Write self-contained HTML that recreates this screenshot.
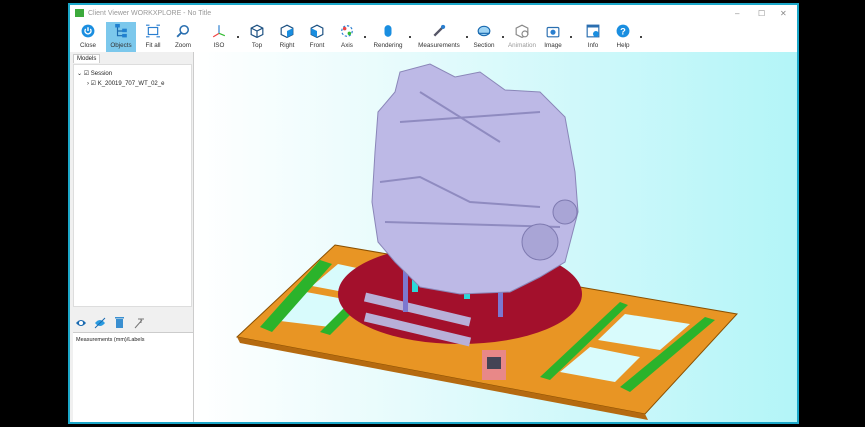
<!DOCTYPE html>
<html><head><meta charset="utf-8"><style>
*{margin:0;padding:0;box-sizing:border-box}
body{width:865px;height:425px;background:#000;font-family:"Liberation Sans",sans-serif;position:relative;overflow:hidden}
.win{position:absolute;left:68px;top:3px;width:731px;height:421px;background:#fff;border:2px solid #1ba7c9}
.title{position:absolute;left:0;top:0;width:727px;height:17px;font-size:7px;color:#999;line-height:17px;padding-left:18px}
.logo{position:absolute;left:5px;top:4px;width:9px;height:8px;background:#3caa3c}
.ctl{position:absolute;top:0;font-size:8px;color:#888;line-height:17px}
.tb{position:absolute;left:0;top:17px;width:727px;height:30px}
.btn{position:absolute;top:0;height:30px;font-size:6.3px;color:#333;text-align:center}
.btn span{position:absolute;bottom:3px;left:0;right:0}
.ic{position:absolute;top:2px;left:50%;margin-left:-7px;width:14px;height:14px}
.dd{position:absolute;top:14px;width:2px;height:2px;background:#444}
.left{position:absolute;left:0;top:47px;width:124px;height:370px;background:#f0f0f0;border-right:1px solid #ccc}
.tab{position:absolute;left:3px;top:2px;font-size:6px;color:#222;background:#fff;border:1px solid #ccc;border-bottom:none;padding:1px 3px}
.tree{position:absolute;left:3px;top:12px;width:119px;height:243px;background:#fff;border:1px solid #ddd;font-size:6px;color:#222}
.meas{position:absolute;left:3px;top:280px;width:120px;height:90px;background:#fff;border-top:1px solid #ccc;font-size:5.5px;color:#222;padding:4px 3px}
.vp{position:absolute;left:125px;top:47px;width:602px;height:370px;background:linear-gradient(90deg,#fff 0%,#e6fbfc 35%,#b3f5f8 100%)}
</style></head><body>
<div class="win">
<div class="title"><div class="logo"></div>Client Viewer WORKXPLORE - No Title
<span class="ctl" style="left:665px">–</span><span class="ctl" style="left:688px">☐</span><span class="ctl" style="left:710px">✕</span></div>
<div class="tb">
<div class="btn" style="left:4px;width:28px"><svg class="ic" viewBox="0 0 12 12"><circle cx="6" cy="6" r="5.5" fill="#1a8ee0"/><path d="M4 4.2A2.6 2.6 0 1 0 8 4.2M6 2.8V6" stroke="#fff" stroke-width="1.2" fill="none"/></svg><span>Close</span></div>
<div class="btn" style="left:36px;width:30px;background:#7cc8ec"><svg class="ic" viewBox="0 0 12 12"><path d="M3 2v8h5M3 6h5" stroke="#1a6ab0" fill="none"/><rect x="1" y="0" width="4" height="3" fill="#2080d0"/><rect x="7" y="4" width="4" height="3" fill="#2080d0"/><rect x="7" y="8.5" width="4" height="3" fill="#2080d0"/></svg><span>Objects</span></div>
<div class="btn" style="left:70px;width:26px"><svg class="ic" viewBox="0 0 12 12"><rect x="2" y="3" width="8" height="6" stroke="#2a7fd0" fill="none"/><path d="M0 1h3M9 1h3M0 11h3M9 11h3" stroke="#2a7fd0"/></svg><span>Fit all</span></div>
<div class="btn" style="left:100px;width:26px"><svg class="ic" viewBox="0 0 12 12"><circle cx="7" cy="5" r="3.5" stroke="#2a6fb0" fill="none" stroke-width="1.3"/><path d="M4.5 7.5L1 11" stroke="#2a6fb0" stroke-width="1.6"/></svg><span>Zoom</span></div>
<div class="btn" style="left:136px;width:26px"><svg class="ic" viewBox="0 0 12 12"><path d="M6 1v7" stroke="#2a7fd0" fill="none"/><path d="M6 8L1 11" stroke="#e44"/><path d="M6 8l5 2" stroke="#3b3"/></svg><span>ISO</span></div>
<div class="dd" style="left:167px"></div>
<div class="btn" style="left:174px;width:26px"><svg class="ic" viewBox="0 0 12 12"><path d="M6 1l5 2.5v5.5L6 11.5 1 9V3.5z" fill="#fff" stroke="#1a4f80"/><path d="M1 3.5L6 6l5-2.5M6 6v5.5" stroke="#1a4f80" fill="none"/></svg><span>Top</span></div>
<div class="btn" style="left:204px;width:26px"><svg class="ic" viewBox="0 0 12 12"><path d="M6 1l5 2.5v5.5L6 11.5 1 9V3.5z" fill="#fff" stroke="#1a4f80"/><path d="M6 6l5-2.5v5.5L6 11.5z" fill="#1a8ee0"/></svg><span>Right</span></div>
<div class="btn" style="left:234px;width:26px"><svg class="ic" viewBox="0 0 12 12"><path d="M6 1l5 2.5v5.5L6 11.5 1 9V3.5z" fill="#fff" stroke="#1a4f80"/><path d="M1 3.5L6 6v5.5L1 9z" fill="#1a8ee0"/></svg><span>Front</span></div>
<div class="btn" style="left:264px;width:26px"><svg class="ic" viewBox="0 0 12 12"><circle cx="6" cy="6" r="4.5" stroke="#2a7fd0" fill="none" stroke-dasharray="2 1.5"/><circle cx="4" cy="4" r="1.5" fill="#e44"/><circle cx="8" cy="8" r="1.5" fill="#3b3"/></svg><span>Axis</span></div>
<div class="dd" style="left:294px"></div>
<div class="btn" style="left:302px;width:32px"><svg class="ic" viewBox="0 0 12 12"><rect x="3" y="1" width="6" height="10" rx="3" fill="#1a8ee0"/></svg><span>Rendering</span></div>
<div class="dd" style="left:339px"></div>
<div class="btn" style="left:347px;width:44px"><svg class="ic" viewBox="0 0 12 12"><path d="M2 10L9 3" stroke="#556" stroke-width="2"/><circle cx="9.5" cy="2.5" r="1.8" fill="#2a7fd0"/></svg><span>Measurements</span></div>
<div class="dd" style="left:396px"></div>
<div class="btn" style="left:400px;width:28px"><svg class="ic" viewBox="0 0 12 12"><ellipse cx="6" cy="6" rx="5" ry="4" fill="#9fd4f4" stroke="#1a6ab0"/><path d="M1 8h10" stroke="#1a6ab0"/></svg><span>Section</span></div>
<div class="dd" style="left:432px"></div>
<div class="btn" style="left:436px;width:32px;color:#999"><svg class="ic" viewBox="0 0 12 12"><path d="M6 1l5 2.5v5.5L6 11.5 1 9V3.5z" fill="none" stroke="#888"/><circle cx="8.5" cy="8.5" r="2.5" fill="#fff" stroke="#888"/></svg><span>Animation</span></div>
<div class="btn" style="left:470px;width:26px"><svg class="ic" viewBox="0 0 12 12"><rect x="1" y="3" width="10" height="8" rx="1" fill="none" stroke="#2a6fb0"/><circle cx="6" cy="7" r="2.2" fill="#2a7fd0"/></svg><span>Image</span></div>
<div class="dd" style="left:500px"></div>
<div class="btn" style="left:510px;width:26px"><svg class="ic" viewBox="0 0 12 12"><rect x="1" y="1" width="10" height="10" fill="#fff" stroke="#2a6fb0"/><rect x="1" y="1" width="10" height="2" fill="#2a6fb0"/><circle cx="8.5" cy="8.5" r="2.5" fill="#1a8ee0"/></svg><span>Info</span></div>
<div class="btn" style="left:540px;width:26px"><svg class="ic" viewBox="0 0 12 12"><circle cx="6" cy="6" r="5.5" fill="#1a8ee0"/><text x="6" y="9" font-size="8" font-weight="bold" fill="#fff" text-anchor="middle" font-family="Liberation Sans">?</text></svg><span>Help</span></div>
<div class="dd" style="left:570px"></div>
</div>
<div class="left">
<div class="tab">Models</div>
<div class="tree">
<div style="position:absolute;left:3px;top:5px">⌄ ☑ Session</div>
<div style="position:absolute;left:13px;top:15px">› ☑ K_20019_707_WT_02_e</div>
</div>
<svg style="position:absolute;left:5px;top:263px" width="80" height="16" viewBox="0 0 80 16">
<path d="M1 8Q6 2 11 8Q6 14 1 8z" fill="#1a6ab0"/><circle cx="6" cy="8" r="2" fill="#fff"/>
<path d="M20 8Q25 2 30 8Q25 14 20 8z" fill="#2a9be0"/><path d="M20 13L30 3" stroke="#1a6ab0"/>
<rect x="41" y="4" width="7" height="9" fill="#3a8fd0"/><rect x="40" y="2" width="9" height="1.5" fill="#3a8fd0"/>
<path d="M60 13l7-8M63 4h6M66 4v4" stroke="#777" fill="none"/>
</svg>
<div class="meas">Measurements (mm)/Labels</div>
</div>
<div class="vp">
<svg width="602" height="370" viewBox="195 50 602 370">
<polygon points="335,243 737,312 645,412 237,335" fill="#e89524" stroke="#8a5000" stroke-width="1"/>
<polygon points="272,318 306,290 360,300 330,325" fill="#d8fbfc"/>
<polygon points="312,284 338,262 385,272 365,294" fill="#d8fbfc"/>
<polygon points="560,370 590,345 640,355 615,380" fill="#d8fbfc"/>
<polygon points="598,338 625,312 690,322 660,348" fill="#d8fbfc"/>
<polygon points="237,335 645,412 648,418 240,341" fill="#b56a10"/>
<polygon points="260,325 320,258 332,262 272,330" fill="#2bb32b"/>
<polygon points="320,330 360,290 368,295 330,333" fill="#2bb32b"/>
<polygon points="540,375 620,300 628,303 550,378" fill="#2bb32b"/>
<polygon points="620,385 705,315 715,318 630,390" fill="#2bb32b"/>
<ellipse cx="460" cy="292" rx="122" ry="50" fill="#a3102c"/>
<rect x="482" y="348" width="24" height="30" fill="#e88888"/>
<rect x="487" y="355" width="14" height="12" fill="#445"/>
<path d="M365 295L470 320M365 315L470 340" stroke="#b8b0d8" stroke-width="9"/>
<rect x="403" y="240" width="5" height="70" fill="#7c78d0"/>
<rect x="498" y="255" width="5" height="60" fill="#7c78d0"/>
<rect x="412" y="262" width="6" height="28" fill="#2cd8d8"/>
<rect x="464" y="272" width="6" height="25" fill="#2cd8d8"/>
<path d="M375 150L378 110L395 90L400 70L430 62L455 75L480 70L505 88L540 90L565 115L575 170L578 210L565 260L540 275L510 290L460 292L420 285L395 260L378 240L372 200z" fill="#bdb9e6" stroke="#8a86b8"/>
<path d="M380 180L420 175L470 200L540 205M385 220L560 225M400 120L540 110M420 90L500 140" stroke="#8f8bc0" stroke-width="2" fill="none"/>
<circle cx="565" cy="210" r="12" fill="#a9a5d6" stroke="#7e7ab0"/>
<circle cx="540" cy="240" r="18" fill="#a9a5d6" stroke="#7e7ab0"/>
</svg>
</div>
</div>
</body></html>
